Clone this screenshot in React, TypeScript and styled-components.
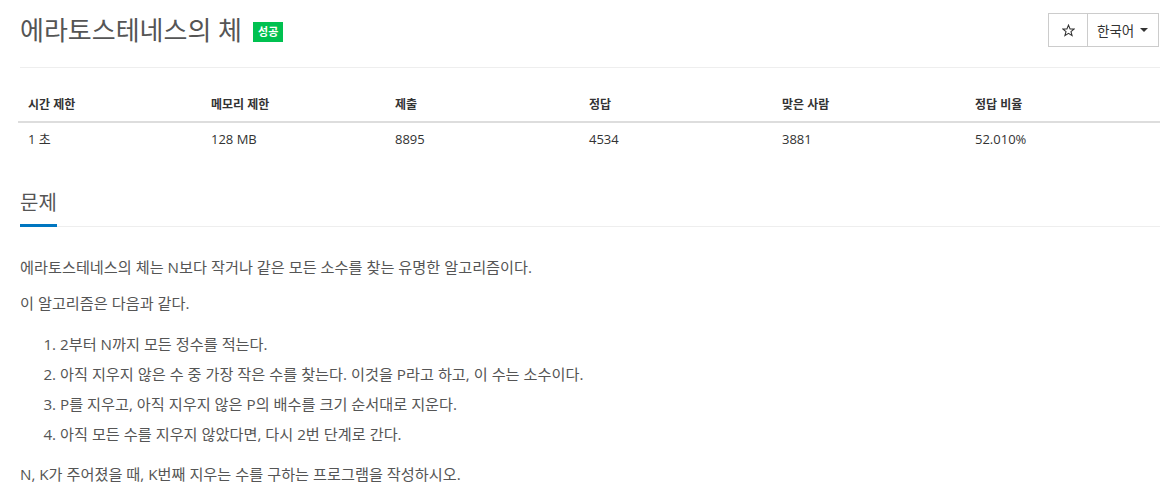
import React from "react";
import styled, { createGlobalStyle } from "styled-components";

const GlobalStyle = createGlobalStyle`
  body {
    margin: 0;
    background: #fff;
    font-family: "Open Sans", "Noto Sans CJK KR", sans-serif;
    color: #333;
  }
`;

const Page = styled.div`
  padding: 0 10px 0 20px;
`;

const Header = styled.div`
  display: flex;
  justify-content: space-between;
  align-items: flex-start;
  height: 67px;
  border-bottom: 1px solid #eee;
`;

const Title = styled.h1`
  margin: 13px 0 0;
  display: flex;
  align-items: center;
  font-size: 26px;
  font-weight: 400;
  color: #555;
  line-height: 34px;
`;

const Badge = styled.span`
  margin-left: 11px;
  margin-top: 4px;
  padding: 0 5px;
  height: 20px;
  line-height: 20px;
  font-size: 11px;
  font-weight: 700;
  color: #fff;
  background: #00c150;
`;

const ButtonGroup = styled.div`
  display: flex;
  margin-top: 13px;
  margin-right: 1px;
`;

const Button = styled.button<{ $wide?: boolean }>`
  height: 34px;
  width: ${(p) => (p.$wide ? "72px" : "40px")};
  display: flex;
  align-items: center;
  justify-content: ${(p) => (p.$wide ? "space-between" : "center")};
  padding: ${(p) => (p.$wide ? "0 10px 0 9px" : "0")};
  border: 1px solid #ccc;
  margin-left: ${(p) => (p.$wide ? "-1px" : "0")};
  background: #fff;
  font-family: inherit;
  font-size: 13.5px;
  color: #333;
  cursor: pointer;
`;

const Caret = styled.span`
  width: 0;
  height: 0;
  border-left: 4px solid transparent;
  border-right: 4px solid transparent;
  border-top: 4px solid #333;
`;

const StatTable = styled.div`
  margin: 20px 0 0 -2px;
  width: 1142px;
`;

const StatRow = styled.div<{ $head?: boolean }>`
  display: grid;
  grid-template-columns: 183px 184px 194px 193px 193px 1fr;
  border-bottom: ${(p) => (p.$head ? "2px solid #ddd" : "none")};
`;

const StatCell = styled.div<{ $head?: boolean }>`
  padding: 8px 10px;
  line-height: 17px;
  font-size: ${(p) => (p.$head ? "12px" : "13px")};
  font-weight: ${(p) => (p.$head ? 700 : 400)};
  color: #333;
`;

const Section = styled.section`
  margin-top: 37px;
`;

const Headline = styled.h2`
  margin: 0;
  border-bottom: 1px solid #eee;
  font-size: 20px;
  font-weight: 400;
  color: #555;
  line-height: 20px;
`;

const HeadlineText = styled.span`
  display: inline-block;
  padding-bottom: 11px;
  margin-bottom: -1px;
  border-bottom: 3px solid #0076c0;
`;

const Body = styled.div`
  padding-top: 28px;
  font-size: 15.2px;
  color: #555;
`;

const Para = styled.p`
  margin: 0 0 12px;
  line-height: 24px;
`;

const Steps = styled.ol`
  margin: 14px 0 13px;
  padding-left: 40px;
`;

const Step = styled.li`
  line-height: 30px;
`;

const heads = ["시간 제한", "메모리 제한", "제출", "정답", "맞은 사람", "정답 비율"];
const values = ["1 초", "128 MB", "8895", "4534", "3881", "52.010%"];

const steps = [
  "2부터 N까지 모든 정수를 적는다.",
  "아직 지우지 않은 수 중 가장 작은 수를 찾는다. 이것을 P라고 하고, 이 수는 소수이다.",
  "P를 지우고, 아직 지우지 않은 P의 배수를 크기 순서대로 지운다.",
  "아직 모든 수를 지우지 않았다면, 다시 2번 단계로 간다.",
];

const StarIcon = () => (
  <svg width="13" height="13" viewBox="0 0 24 24" fill="none" stroke="#333" strokeWidth="2" strokeLinejoin="miter">
    <polygon points="12,2 14.9,9 22.5,9.3 16.6,14.1 18.6,21.5 12,17.3 5.4,21.5 7.4,14.1 1.5,9.3 9.1,9" />
  </svg>
);

const App = () => {
  return (
    <Page>
      <GlobalStyle />
      <Header>
        <Title>
          에라토스테네스의 체
          <Badge>성공</Badge>
        </Title>
        <ButtonGroup>
          <Button>
            <StarIcon />
          </Button>
          <Button $wide>
            한국어
            <Caret />
          </Button>
        </ButtonGroup>
      </Header>

      <StatTable>
        <StatRow $head>
          {heads.map((h) => (
            <StatCell $head key={h}>
              {h}
            </StatCell>
          ))}
        </StatRow>
        <StatRow>
          {values.map((v) => (
            <StatCell key={v}>{v}</StatCell>
          ))}
        </StatRow>
      </StatTable>

      <Section>
        <Headline>
          <HeadlineText>문제</HeadlineText>
        </Headline>
        <Body>
          <Para>에라토스테네스의 체는 N보다 작거나 같은 모든 소수를 찾는 유명한 알고리즘이다.</Para>
          <Para>이 알고리즘은 다음과 같다.</Para>
          <Steps>
            {steps.map((s) => (
              <Step key={s}>{s}</Step>
            ))}
          </Steps>
          <Para>N, K가 주어졌을 때, K번째 지우는 수를 구하는 프로그램을 작성하시오.</Para>
        </Body>
      </Section>
    </Page>
  );
};

export default App;
